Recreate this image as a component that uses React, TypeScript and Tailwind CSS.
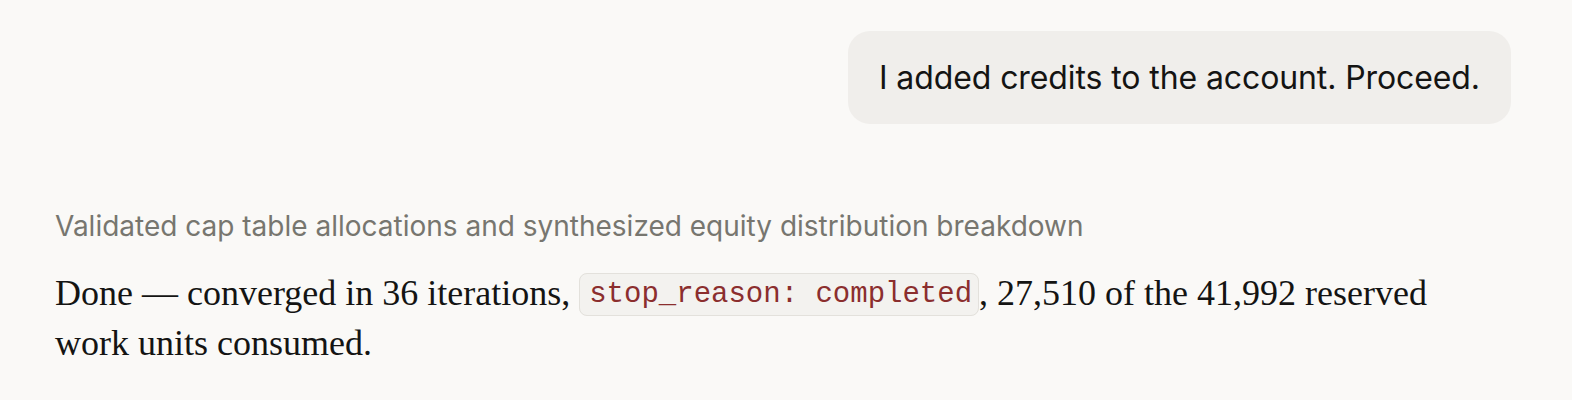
import React from "react";

export default function App() {
  return (
    <div className="min-h-[400px] w-full bg-[#faf9f7] text-[#141413]">
      <div className="flex justify-end pr-[61px] pt-[31px]">
        <div className="rounded-[22px] bg-[#f0eeeb] px-[31px] py-[27px] font-['Inter',sans-serif] text-[32px] leading-[39px] tracking-[-0.1px] text-[#141413]">
          I added credits to the account. Proceed.
        </div>
      </div>
      <div className="pl-[55px] pt-[85px]">
        <div className="font-['Inter',sans-serif] text-[28px] leading-[34px] text-[#77766f]">
          Validated cap table allocations and synthesized equity distribution breakdown
        </div>
        <p className="mt-[26px] max-w-[1400px] font-['Liberation_Serif',serif] text-[36px] leading-[48px] text-[#141413]">
          Done — converged in 36 iterations,{" "}
          <code className="rounded-[8px] border border-[#e3e1dc] bg-[#f3f2ef] py-[4px] pl-[9px] pr-[6px] align-[3px] font-['Liberation_Mono',monospace] text-[29px] text-[#8b2e2e]">
            stop_reason: completed
          </code>
          , 27,510 of the 41,992 reserved work units consumed.
        </p>
      </div>
    </div>
  );
}
